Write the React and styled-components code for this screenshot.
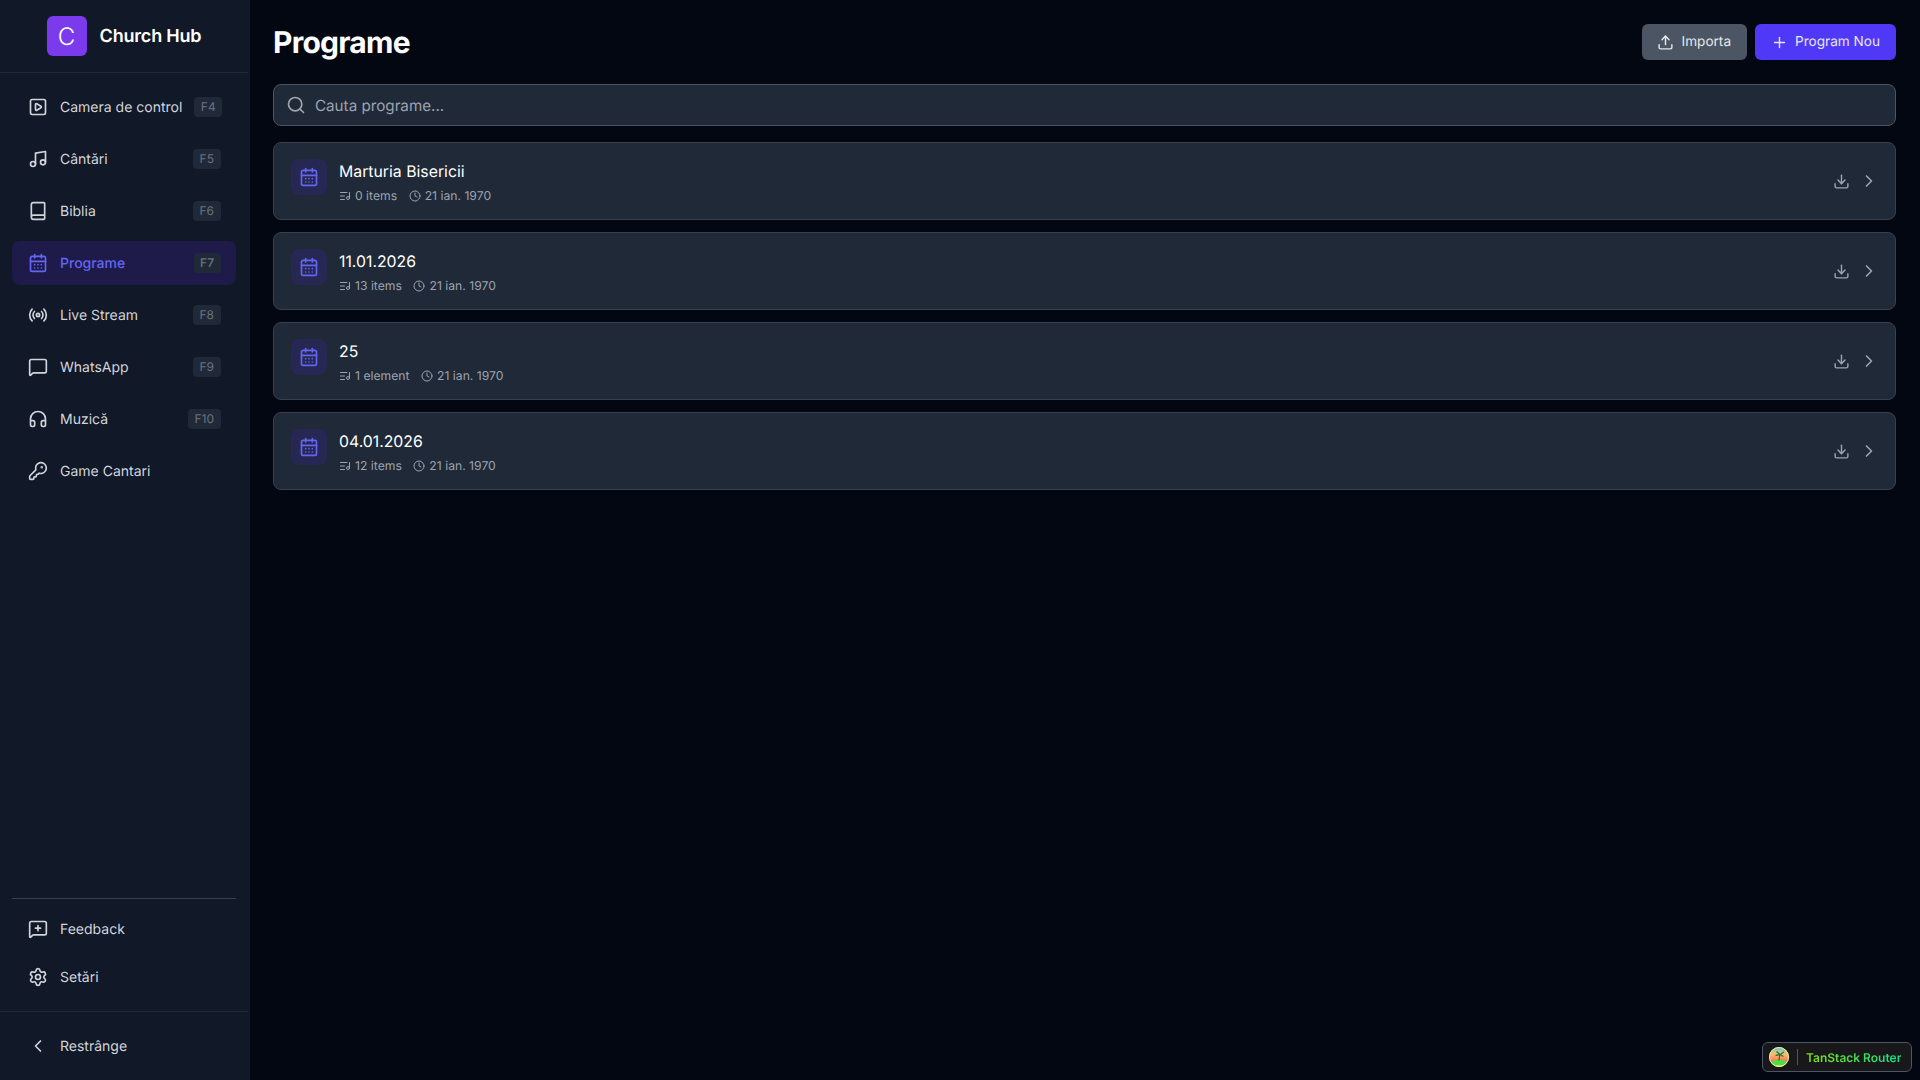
import React from 'react';
import styled, { createGlobalStyle } from 'styled-components';
import { SquarePlay, Music, Book, CalendarDays, Radio, MessageSquare, Headphones, KeyRound, MessageSquarePlus, Settings, ChevronLeft, ChevronRight, Upload, Plus, Search, ListMusic, Clock, Download } from 'lucide-react';

const Global = createGlobalStyle`
  html, body { margin: 0; padding: 0; background: #030712; }
  * { box-sizing: border-box; }
  body { font-family: Inter, "Liberation Sans", sans-serif; color: #fff; text-rendering: geometricPrecision; -webkit-font-smoothing: antialiased; }
`;
const Shell = styled.div`display: flex; width: 1920px; height: 1080px; overflow: hidden; background: #030712;`;
const Sidebar = styled.aside`width: 250px; flex: none; height: 100%; background: #111827; border-right: 2px solid #111827; display: flex; flex-direction: column;`;
const Brand = styled.div`height: 73px; flex: none; border-bottom: 1px solid #1f2937; display: flex; align-items: center; justify-content: center; gap: 13px;`;
const Logo = styled.div`width: 40px; height: 40px; border-radius: 6px; background: #7c3aed; display: flex; align-items: center; justify-content: center; font-size: 24px; color: #fff; font-weight: 300;`;
const BrandName = styled.span`font-size: 18px; font-weight: 600; color: #fff; letter-spacing: -0.2px;`;
const Nav = styled.nav`flex: 1; display: flex; flex-direction: column; gap: 8px; padding: 12px 12px 0;`;
const Item = styled.div`
  height: 44px; display: flex; align-items: center; gap: 12px; padding: 0 15.5px 0 16px; border-radius: 8px;
  font-size: 14px; line-height: 20px; font-weight: ${p => p.$active ? 500 : 400};
  color: ${p => p.$active ? '#6366f1' : '#d1d5db'};
  background: ${p => p.$active ? '#1e1b4b' : 'transparent'};
  svg { flex: none; }
`;
const Label = styled.span`flex: 1; white-space: nowrap; padding-top: 1px;`;
const Kbd = styled.span`height: 20px; padding: 0 6.5px; border-radius: 4px; background: #1f2937; color: #6b7280; font-size: 12px; display: flex; align-items: center;`;
const Footer = styled.div`flex: none; display: flex; flex-direction: column;`;
const Rule = styled.div`height: 1px; background: #374151; margin: 0 12px 8px;`;
const Group = styled.div`display: flex; flex-direction: column; gap: 4px; padding: 0 12px 12px;`;
const Collapse = styled.div`height: 69px; border-top: 1px solid #1f2937; padding: 12px; display: flex; align-items: center;`;
const CollapseItem = styled(Item)`flex: 1;`;
const Main = styled.main`flex: 1; min-width: 0; padding: 24px 24px 24px 23px; position: relative;`;
const Head = styled.header`display: flex; align-items: center; justify-content: space-between; height: 36px; margin-bottom: 24px;`;
const Title = styled.h1`margin: 0; font-size: 30px; line-height: 36px; font-weight: 700; color: #fff; letter-spacing: -0.75px; padding-top: 1px;`;
const Actions = styled.div`display: flex; gap: 8px;`;
const Btn = styled.button`
  height: 36px; border: 0; border-radius: 6px; font: 400 13.6px Inter, sans-serif; color: #e5e7eb;
  background: ${p => p.$primary ? '#4f39f6' : '#4b5563'}; display: flex; align-items: center;
  padding: 0 16px 0 15.5px; gap: 7.5px;
  text-rendering: geometricPrecision;
`;
const SearchBox = styled.div`height: 42px; border: 1px solid #4b5563; background: #1f2937; border-radius: 8px; display: flex; align-items: center; gap: 9px; padding: 0 11px 0 12px; margin-bottom: 16px; color: #9ca3af; font-size: 15.2px;`;
const List = styled.div`display: flex; flex-direction: column; gap: 12px;`;
const Card = styled.div`height: 78px; border: 1px solid #374151; background: #1f2937; border-radius: 8px; padding: 0 16px 0 17px; display: flex; align-items: center; gap: 11px;`;
const IconBox = styled.div`width: 36px; height: 36px; margin-top: -8px; border-radius: 8px; background: #272753; color: #6366f1; display: flex; align-items: center; justify-content: center; flex: none;`;
const Body = styled.div`flex: 1; min-width: 0; display: flex; flex-direction: column; gap: 4px; padding: 2px 0 0 1px;`;
const Name = styled.div`font-size: 15.8px; line-height: 24px; font-weight: 400; color: #fff;`;
const Meta = styled.div`display: flex; gap: 11.5px; font-size: 12.2px; line-height: 16px; color: #9ca3af;`;
const MetaPart = styled.span`display: flex; align-items: center; gap: 4px;`;
const CardActions = styled.div`display: flex; align-items: center; gap: 9.5px; color: #9ca3af;`;
const RouterBadge = styled.div`position: absolute; right: 8px; bottom: 8px; height: 30px; width: 150px; border: 1px solid #4b5563; border-radius: 6px; background: #18181b; display: flex; align-items: center; padding: 0 8px 0 6px; gap: 8px;`;
const Sep = styled.span`width: 1px; height: 16px; background: #4b5563; flex: none;`;
const RouterText = styled.span`font-size: 12px; font-weight: 600; white-space: nowrap; background: linear-gradient(90deg, #84e016, #10e08a); -webkit-background-clip: text; background-clip: text; color: transparent;`;

const nav = [
  [SquarePlay, 'Camera de control', 'F4'], [Music, 'Cântări', 'F5'], [Book, 'Biblia', 'F6'],
  [CalendarDays, 'Programe', 'F7', true], [Radio, 'Live Stream', 'F8'], [MessageSquare, 'WhatsApp', 'F9'],
  [Headphones, 'Muzică', 'F10'], [KeyRound, 'Game Cantari'],
];
const programs = [
  ['Marturia Bisericii', '0 items'], ['11.01.2026', '13 items'], ['25', '1 element'], ['04.01.2026', '12 items'],
];

export default function App() {
  return (
    <Shell>
      <Global />
      <Sidebar>
        <Brand><Logo>C</Logo><BrandName>Church Hub</BrandName></Brand>
        <Nav>
          {nav.map(([Icon, label, key, active]) => (
            <Item key={label} $active={active}><Icon size={20} strokeWidth={2} /><Label>{label}</Label>{key && <Kbd>{key}</Kbd>}</Item>
          ))}
        </Nav>
        <Footer>
          <Rule />
          <Group>
            <Item><MessageSquarePlus size={20} /><Label>Feedback</Label></Item>
            <Item><Settings size={20} /><Label>Setări</Label></Item>
          </Group>
          <Collapse><CollapseItem><ChevronLeft size={20} /><Label>Restrânge</Label></CollapseItem></Collapse>
        </Footer>
      </Sidebar>
      <Main>
        <Head>
          <Title>Programe</Title>
          <Actions>
            <Btn><Upload size={17} />Importa</Btn>
            <Btn $primary><Plus size={17} />Program Nou</Btn>
          </Actions>
        </Head>
        <SearchBox><Search size={20} />Cauta programe...</SearchBox>
        <List>
          {programs.map(([name, count]) => (
            <Card key={name}>
              <IconBox><CalendarDays size={20} /></IconBox>
              <Body>
                <Name>{name}</Name>
                <Meta>
                  <MetaPart><ListMusic size={12} />{count}</MetaPart>
                  <MetaPart><Clock size={12} />21 ian. 1970</MetaPart>
                </Meta>
              </Body>
              <CardActions><Download size={17} /><ChevronRight size={20} /></CardActions>
            </Card>
          ))}
        </List>
        <RouterBadge>
          <svg width="20" height="20" viewBox="0 0 20 20">
            <defs>
              <linearGradient id="tsg" x1="0" y1="0" x2="0" y2="1"><stop offset="0" stopColor="#5fc4d8" /><stop offset="0.35" stopColor="#fbbf6a" /><stop offset="0.7" stopColor="#f97360" /><stop offset="1" stopColor="#fde047" /></linearGradient>
              <clipPath id="tsc"><circle cx="10" cy="10" r="10" /></clipPath>
            </defs>
            <g clipPath="url(#tsc)">
              <rect width="20" height="20" fill="url(#tsg)" />
              <ellipse cx="10" cy="16" rx="7.5" ry="3.5" fill="#4ade4a" />
              <rect y="18" width="20" height="2" fill="#facc15" />
              <path d="M10 13.5c.2-2.5.4-4 1-6" stroke="#92400e" strokeWidth="1.2" fill="none" />
              <path d="M11 7.5 6.5 8.5M11 7.5 7.5 4.5M11 7.5l4-2.5M11 7.5l3.5 2" stroke="#15803d" strokeWidth="1.4" fill="none" />
            </g>
            <circle cx="10" cy="10" r="9.5" fill="none" stroke="#d9f99d" strokeWidth="1" />
          </svg>
          <Sep />
          <RouterText>TanStack Router</RouterText>
        </RouterBadge>
      </Main>
    </Shell>
  );
}
